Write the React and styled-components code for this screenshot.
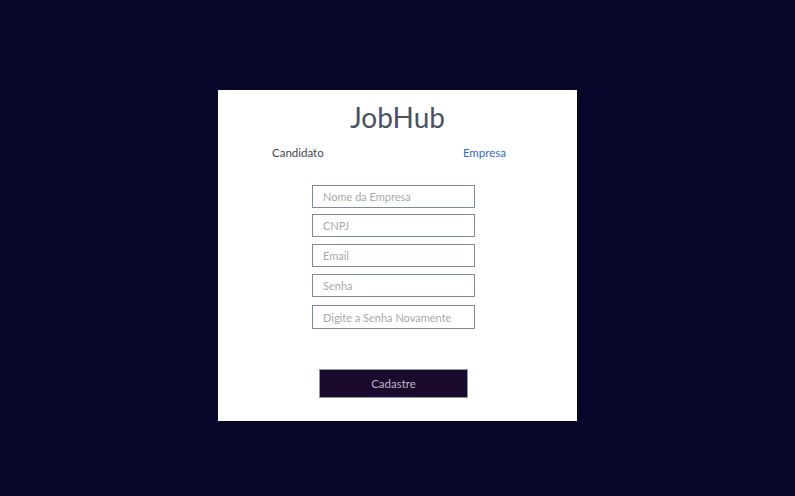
import styled, { createGlobalStyle } from "styled-components";

const GlobalStyle = createGlobalStyle`
  body {
    margin: 0;
    background: #07072a;
    font-family: Lato, "Open Sans", sans-serif;
  }
`;

const Page = styled.div`
  min-height: 496px;
  display: flex;
  justify-content: center;
  align-items: flex-start;
  padding-top: 90px;
  box-sizing: border-box;
`;

const Card = styled.div`
  width: 359px;
  height: 331px;
  background: #ffffff;
  display: flex;
  flex-direction: column;
  align-items: center;
  box-sizing: border-box;
  padding-top: 9px;
`;

const Title = styled.h1`
  margin: 0;
  font-size: 28px;
  font-weight: 400;
  color: #4a5261;
  line-height: 36px;
`;

const Tabs = styled.div`
  width: 100%;
  box-sizing: border-box;
  display: flex;
  justify-content: space-between;
  padding: 0 71px 0 54px;
  margin-top: 10px;
`;

const Tab = styled.span`
  font-size: 11.5px;
  line-height: 16px;
  color: ${(p) => (p.$active ? "#2f6bd8" : "#3f4653")};
  cursor: pointer;
`;

const Form = styled.form`
  display: flex;
  flex-direction: column;
  align-items: center;
  margin: 24px 8px 0 0;
`;

const Input = styled.input`
  width: 163px;
  height: ${(p) => p.$h || 23}px;
  box-sizing: border-box;
  border: 1px solid #7d8aa6;
  padding: 0 10px;
  margin-bottom: ${(p) => p.$gap || 7}px;
  font-family: Lato, sans-serif;
  font-size: 11px;
  color: #333;
  outline: none;
  &::placeholder {
    color: #a8a8a8;
  }
`;

const Button = styled.button`
  margin-top: 33px;
  width: 149px;
  height: 29px;
  background: #1a0b2e;
  border: 1px solid #8c96b0;
  color: #b9b6c6;
  font-family: Lato, sans-serif;
  font-size: 11.5px;
  cursor: pointer;
`;

const fields = [
  { ph: "Nome da Empresa", gap: 6 },
  { ph: "CNPJ", gap: 7 },
  { ph: "Email", gap: 7 },
  { ph: "Senha", gap: 8 },
  { ph: "Digite a Senha Novamente", gap: 0, h: 24 },
];

export default function App() {
  return (
    <>
      <GlobalStyle />
      <Page>
        <Card>
          <Title>JobHub</Title>
          <Tabs>
            <Tab>Candidato</Tab>
            <Tab $active>Empresa</Tab>
          </Tabs>
          <Form onSubmit={(e) => e.preventDefault()}>
            {fields.map((f) => (
              <Input key={f.ph} placeholder={f.ph} $gap={f.gap} $h={f.h} />
            ))}
            <Button type="submit">Cadastre</Button>
          </Form>
        </Card>
      </Page>
    </>
  );
}
